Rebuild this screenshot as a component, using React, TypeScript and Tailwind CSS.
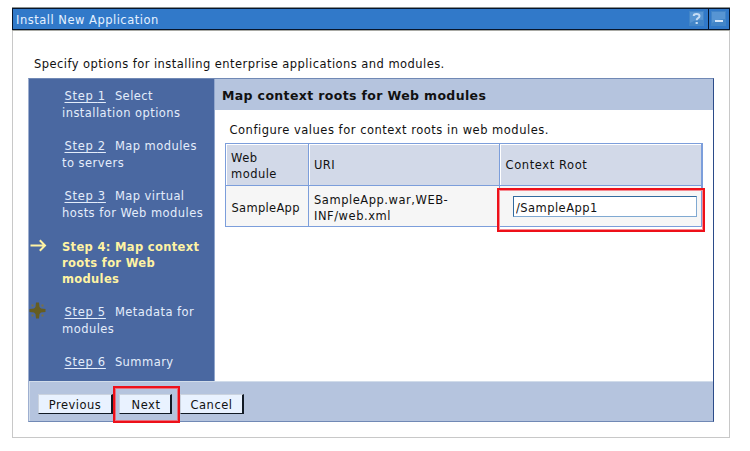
import type { ReactNode } from "react";

function Step({ n, lead, rest }: { n: number; lead: string; rest?: string }) {
  return (
    <li className="leading-[17px] text-[#e4edfb]">
      <div className="pl-[2.5px]">
        <a className="tracking-[0.7px] underline underline-offset-2">Step {n}</a>
        <span className="ml-[9px]">{lead}</span>
      </div>
      {rest && <div>{rest}</div>}
    </li>
  );
}

function Button({ children, className }: { children: ReactNode; className: string }) {
  return (
    <button
      className={`h-5 border border-t-[#cbd3df] border-l-[#cbd3df] border-r-2 border-b-[#111a25] border-r-[#111a25] bg-[#e9f2ff] text-center leading-[20px] tracking-[0.5px] ${className}`}
    >
      {children}
    </button>
  );
}

export default function App() {
  return (
    <div className="h-[451px] w-[750px] overflow-hidden bg-white pt-[7px] pl-3 font-['DejaVu_Sans',Verdana,sans-serif] text-[11.5px] tracking-[0.45px] whitespace-pre text-[#111]">
      <div className="flex h-[431px] w-[718px] flex-col border-r border-b border-l border-[#c8c8c8]">
        <header className="-mx-px flex h-6 shrink-0 border-y border-t-[#8d928f] border-b-[#a9aaa4]">
          <div className="flex h-[22px] flex-1 border border-[#07152b] bg-[#3179c9]">
            <div className="flex-1 pl-[3px] leading-[23px] tracking-[0.5px] text-[#e5f1ff]">Install New Application</div>
            <div className="flex w-[19px] pt-0.5">
              <svg width="16" height="16" viewBox="0 0 16 16" fill="none">
                <path d="M0 0H15V15H0Z" fill="#4285c8" />
                <path d="M1 1H14V9Q7 8 1 12Z" fill="#5795d3" />
                <path d="M4.8 5V4.5Q5 3 7.5 3Q10.5 3 10.5 5Q10.5 6.3 9 7.1Q7.7 7.8 7.7 9.3" stroke="#c5dcf5" strokeWidth="2" />
                <path d="M6.6 11H8.8V13H6.6Z" fill="#c5dcf5" />
              </svg>
            </div>
            <div className="flex w-[21px] border-l border-[#07152b] pt-0.5 pl-0.5">
              <svg width="16" height="16" viewBox="0 0 16 16">
                <path d="M0 0H15V15H0Z" fill="#4285c8" />
                <path d="M1 1H14V8Q7 8 1 12Z" fill="#5795d3" />
                <path d="M4 9H12V11H4Z" fill="#d5e7fb" />
              </svg>
            </div>
          </div>
        </header>

        <p className="mt-[25px] h-[22px] pl-[21px] leading-[17px]">
          Specify options for installing enterprise applications and modules.
        </p>

        <section className="ml-[15px] flex h-[344px] w-[686px] flex-col border border-t-[#7189b5] border-r-[#2b4b89] border-b-[#7189b5] border-l-[#9eafd0]">
          <div className="flex h-[302px]">
            <nav className="relative w-[186px] border-r border-[#91a6cc] bg-[#4a68a1] pt-[9px] pl-[33px]">
              <svg className="absolute top-[160px] left-[1px]" width="18" height="13" viewBox="0 0 18 13" fill="none">
                <path d="M0.5 6.5H15M9.8 1.2L15 6.5L9.8 11.8" stroke="#fff3a3" strokeWidth="2" />
              </svg>
              <svg className="absolute top-[223px] left-0" width="17" height="17" viewBox="0 0 17 17">
                <path d="M7 0.5H10L10.5 5L12 6.5L16.5 7V10L12 10.5L10.5 12L10 16.5H7L6.5 12L5 10.5L0.5 10V7L5 6.5L6.5 5Z" fill="#665d20" />
                <path d="M2.5 2.5H4.5V4.5H2.5ZM12.5 2.5H14.5V4.5H12.5ZM2.5 12.5H4.5V14.5H2.5ZM12.5 12.5H14.5V14.5H12.5Z" fill="#7b7141" />
              </svg>
              <ol className="flex flex-col gap-4">
                <Step n={1} lead="Select" rest="installation options" />
                <Step n={2} lead="Map modules" rest="to servers" />
                <Step n={3} lead="Map virtual" rest="hosts for Web modules" />
                <li className="mt-px mb-px leading-4 font-bold tracking-[0.33px] text-[#fff3a3]">
                  <div>Step 4: Map context</div>
                  <div>roots for Web</div>
                  <div>modules</div>
                </li>
                <Step n={5} lead="Metadata for" rest="modules" />
                <Step n={6} lead="Summary" />
              </ol>
            </nav>

            <main className="flex-1">
              <h1 className="h-[31px] bg-[#b5c4de] pl-[7px] text-[12.5px] leading-[34px] font-bold tracking-[0.36px]">Map context roots for Web modules</h1>
              <p className="mt-3 h-[21px] pl-[14.5px] leading-[17px] tracking-[0.51px]">Configure values for context roots in web modules.</p>
              <div className="ml-[10px] grid h-[84px] w-[478px] grid-cols-[83px_191px_1fr] grid-rows-[42px_41px] border-t border-l border-[#7c9edb]">
                <div className="flex items-center border-r border-b border-[#7c9edb] bg-[#d2d9e8] pt-[3px] pl-[5px] leading-4 inset-shadow-[1px_1px_white]">
                  {"Web\nmodule"}
                </div>
                <div className="flex items-center border-r border-b border-[#7c9edb] bg-[#d2d9e8] pt-[3px] pl-[5px] inset-shadow-[1px_1px_white]">URI</div>
                <div className="flex items-center border-r-2 border-b border-[#7c9edb] bg-[#d2d9e8] pt-[3px] pl-[5.5px] tracking-[0.6px] inset-shadow-[1px_1px_white]">
                  Context Root
                </div>
                <div className="flex items-center border-r border-b border-[#7c9edb] bg-[#f6f6f6] pt-[5px] pl-[5.5px] tracking-[0.3px]">SampleApp</div>
                <div className="flex items-center border-r border-b border-[#7c9edb] bg-[#f6f6f6] pt-[3px] pl-[5px] leading-4 tracking-[0.53px]">
                  {"SampleApp.war,WEB-\nINF/web.xml"}
                </div>
                <div className="relative border-r-2 border-b border-[#7c9edb] bg-[#f6f6f6] pt-[10px] pl-[13px]">
                  <input
                    defaultValue="/SampleApp1"
                    className="block h-[21px] w-[184px] border border-t-[#316a9f] border-r-[#80a9d2] border-b-[#80a9d2] border-l-[#316a9f] bg-white pt-[3px] pl-[2px] leading-[16px]"
                  />
                  <div className="absolute top-[2px] left-[-3px] h-[44px] w-[208px] border-2 border-[#ee1019] inset-shadow-[0_0_0_1px_#f58b92]" />
                </div>
              </div>
            </main>
          </div>

          <footer className="flex flex-1 border-t border-l border-t-[#d1dcea] border-l-[#d1dcea] bg-[#b5c4de] pt-3 pl-2">
            <Button className="w-[75px]">Previous</Button>
            <div className="relative ml-[6px]">
              <Button className="w-[53px] pl-0.5">Next</Button>
              <div className="absolute -top-2 -left-[6px] h-[37px] w-[67px] border-2 border-[#ee1019] inset-shadow-[0_0_0_1px_#e5727f]" />
            </div>
            <Button className="ml-2 w-16">Cancel</Button>
          </footer>
        </section>
      </div>
    </div>
  );
}
